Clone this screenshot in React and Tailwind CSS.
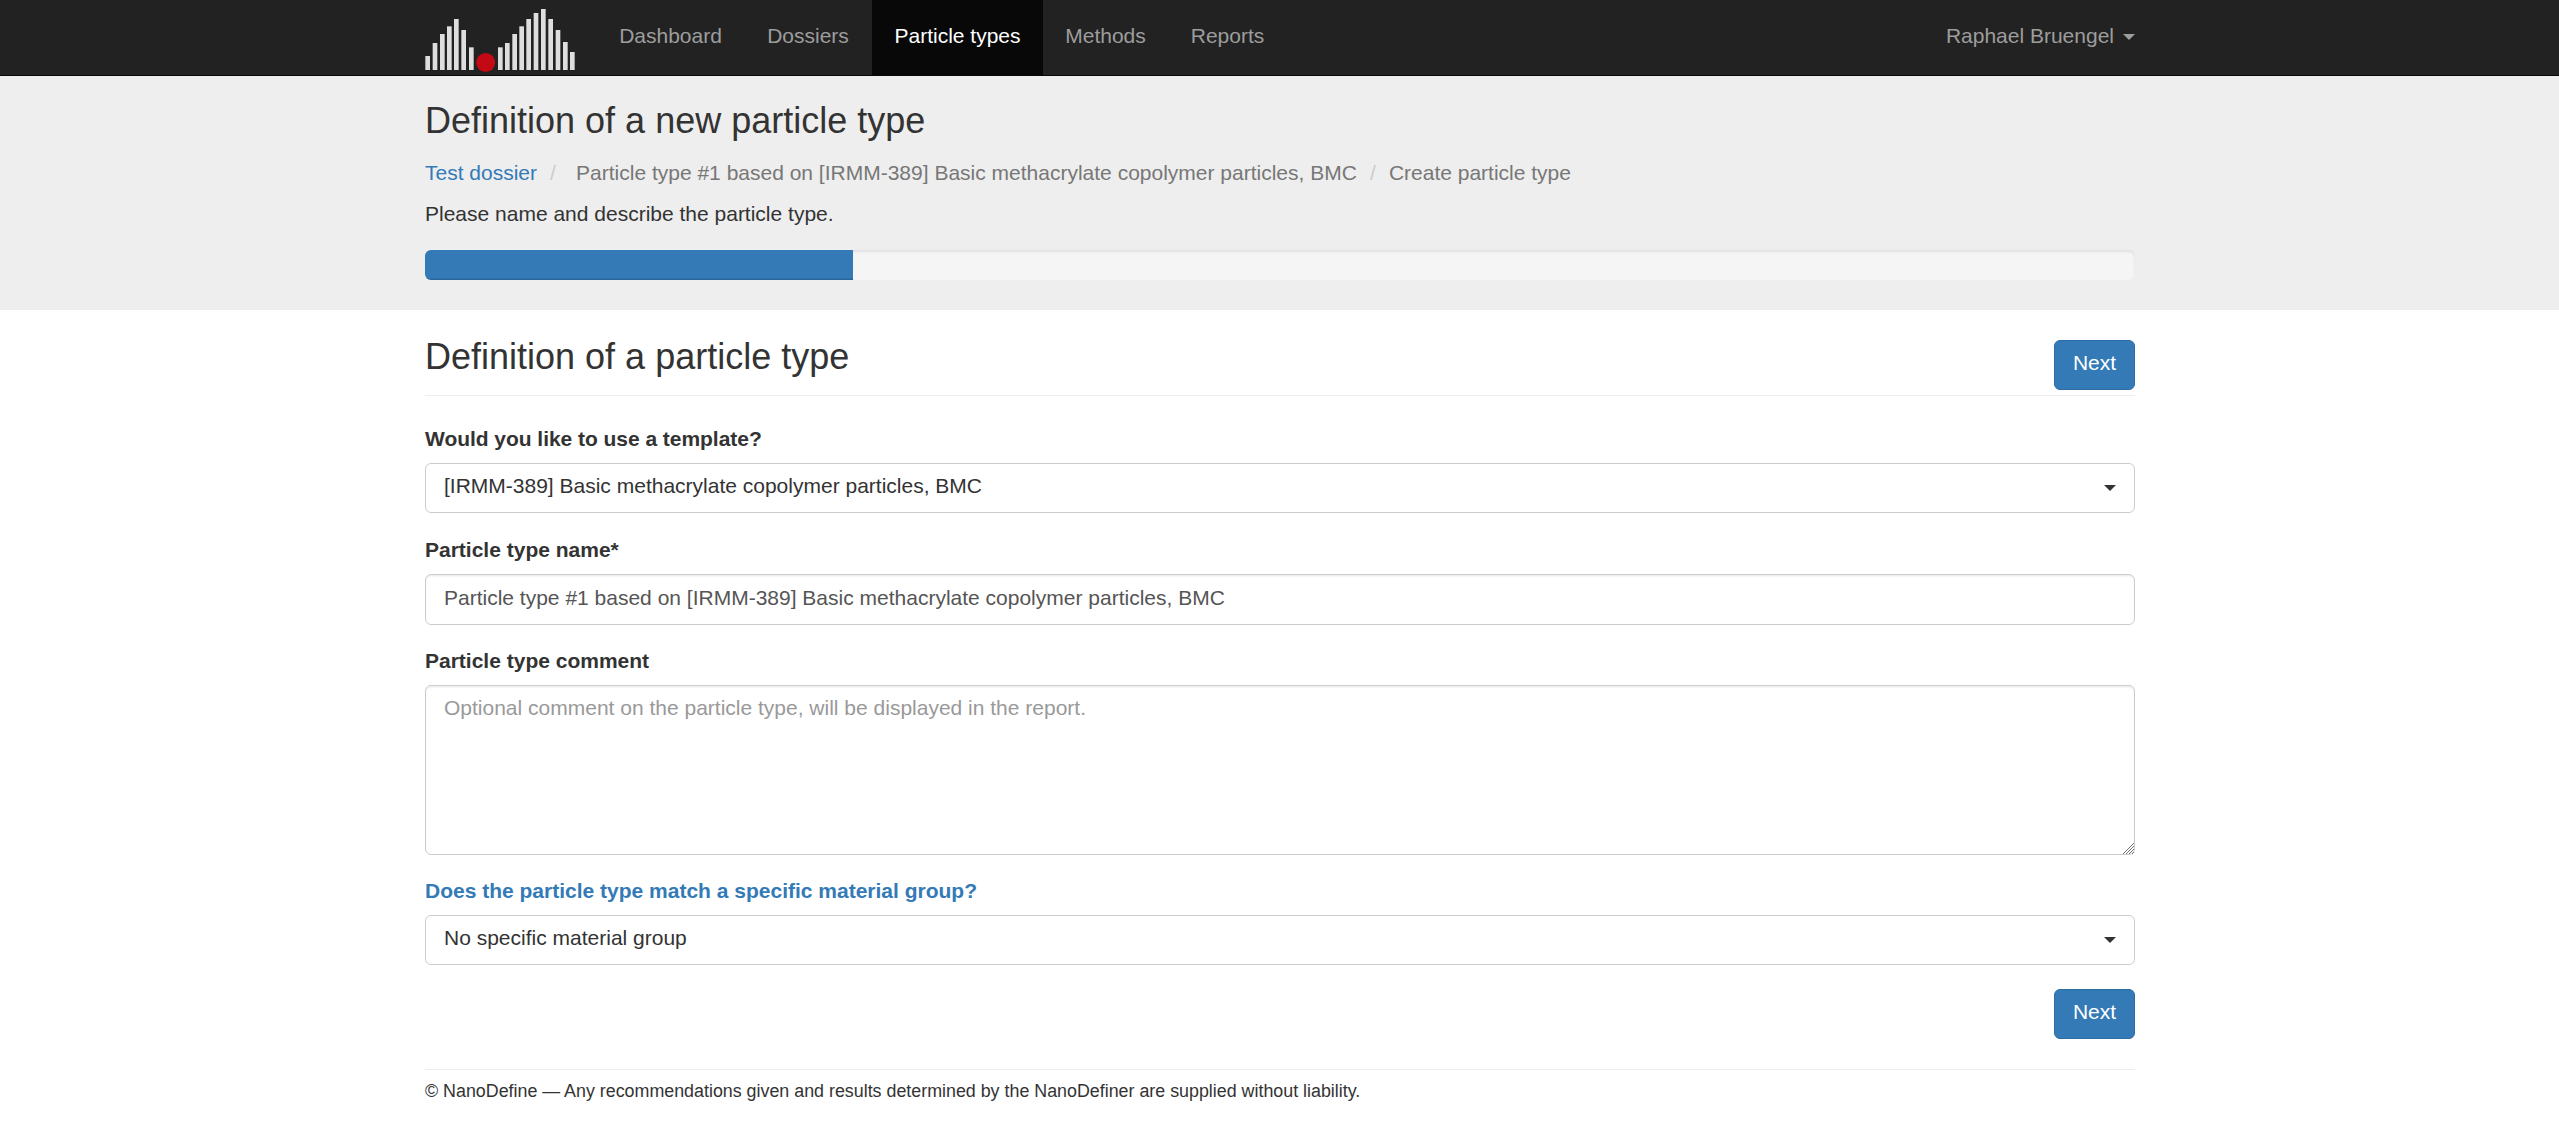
const BARS = [
  [31, 168], [53, 129], [75, 102], [96, 79], [117, 57], [139, 90], [162, 142],
  [249, 142], [270, 129], [292, 102], [313, 79], [334, 57], [356, 39],
  [378, 27], [400, 57], [422, 90], [444, 126], [465, 156],
];

function Logo() {
  return (
    <svg viewBox="30 0 450 225" className="h-[75px] w-[150px] shrink-0">
      {BARS.map(([x, top]) => (
        <rect key={x} x={x} y={top} width="14" height={210 - top} fill="#dedede" />
      ))}
      <circle cx="212" cy="187.500" r="28.500" fill="#c30a14" />
    </svg>
  );
}

function Caret({ className }) {
  return (
    <svg viewBox="0 0 12 6" className={`h-1.5 w-3 shrink-0 fill-current ${className}`}>
      <path d="M0 0h12L6 6z" />
    </svg>
  );
}

const NAV = [
  { label: "Dashboard", box: "w-[147px]" },
  { label: "Dossiers", box: "w-[128px]" },
  { label: "Particle types", box: "w-[171px]", active: true },
  { label: "Methods", box: "w-[125px]" },
  { label: "Reports", box: "w-[119px]" },
];

function Navbar() {
  return (
    <nav className="h-[76px] border-b border-[#080808] bg-[#222222] pl-px">
      <div className="mx-auto flex h-[75px] w-[1710px]">
        <Logo />
        <ul className="ml-[22px] flex">
          {NAV.map(({ label, box, active }) => (
            <li
              key={label}
              className={`${box} whitespace-nowrap pt-[21px] text-center ${
                active ? "bg-[#080808] text-white" : "text-[#9d9d9d]"
              }`}
            >
              {label}
            </li>
          ))}
        </ul>
        <div className="ml-auto flex pt-[21px] text-[#9d9d9d]">
          Raphael Bruengel
          <Caret className="ml-[9px] mt-[13px]" />
        </div>
      </div>
    </nav>
  );
}

function Select({ children }) {
  return (
    <button className="flex h-[50px] w-full items-start rounded-[6px] border border-[#cccccc] bg-white pl-[18px] pr-[18px] pt-[7px] text-left">
      {children}
      <Caret className="ml-auto mt-[14px]" />
    </button>
  );
}

function NextButton() {
  return (
    <button className="h-[50px] w-[81px] rounded-[6px] border border-[#2e6da4] bg-[#337ab7] pb-[5px] text-white">
      Next
    </button>
  );
}

const INSET = "shadow-[inset_0_1.5px_1.5px_rgba(0,0,0,0.075)]";

export default function App() {
  return (
    <div className="h-[1137px] overflow-hidden bg-white font-['Liberation_Sans',Arial,sans-serif] text-[21px] leading-[30px] text-[#333333]">
      <Navbar />
      <header className="h-[234px] bg-[#eeeeee] pl-px pt-[25px]">
        <div className="mx-auto w-[1710px]">
          <h1 className="text-[36px] leading-10">Definition of a new particle type</h1>
          <div className="mt-[17px] flex whitespace-pre text-[#777777]">
            <span className="text-[#337ab7]">Test dossier</span>
            <span className="w-[39px] pl-[13px] text-[#cccccc]">/</span>
            <span>Particle type #1 based on [IRMM-389] Basic methacrylate copolymer particles, BMC</span>
            <span className="w-8 text-center text-[#cccccc]">/</span>
            <span>Create particle type</span>
          </div>
          <p className="mt-[11px]">Please name and describe the particle type.</p>
          <div className="mt-[21px] h-[30px] overflow-hidden rounded-[6px] bg-[#f5f5f5] shadow-[inset_0_1.5px_3px_rgba(0,0,0,0.1)]">
            <div className="h-full w-[428px] bg-[#337ab7] shadow-[inset_0_-1.5px_0_rgba(0,0,0,0.15)]" />
          </div>
        </div>
      </header>
      <div className="pl-px">
        <main className="mx-auto w-[1710px]">
          <div className="flex h-[86px] items-start justify-between border-b border-[#eeeeee] pt-[30px]">
            <h2 className="-mt-[3px] text-[36px] leading-10">Definition of a particle type</h2>
            <NextButton />
          </div>
          <div className="pt-[28px]">
            <label className="block font-bold tracking-[-0.04px]">Would you like to use a template?</label>
            <div className="mt-[9px]">
              <Select>[IRMM-389] Basic methacrylate copolymer particles, BMC</Select>
            </div>
          </div>
          <div className="pt-[22px]">
            <label className="block font-bold">Particle type name*</label>
            <input
              className={`mt-[9px] block h-[51px] w-full rounded-[6px] border border-[#cccccc] px-[18px] pb-[3px] text-[#555555] ${INSET}`}
              defaultValue="Particle type #1 based on [IRMM-389] Basic methacrylate copolymer particles, BMC"
            />
          </div>
          <div className="pt-[21px]">
            <label className="block font-bold">Particle type comment</label>
            <div className="relative mt-[9px]">
              <textarea
                className={`block h-[170px] w-full resize-none rounded-[6px] border border-[#cccccc] px-[18px] pt-[7px] placeholder:text-[#999999] ${INSET}`}
                placeholder="Optional comment on the particle type, will be displayed in the report."
              />
              <svg viewBox="0 0 11 11" className="absolute bottom-px right-px h-[11px] w-[11px]" stroke="#707070" strokeWidth="1">
                <path d="M0 11L11 0M3 11L11 3M6 11L11 6M9 11L11 9" />
              </svg>
            </div>
          </div>
          <div className="pt-[21px]">
            <label className="block font-bold text-[#337ab7]">Does the particle type match a specific material group?</label>
            <div className="mt-[9px]">
              <Select>No specific material group</Select>
            </div>
          </div>
          <div className="mt-6 flex justify-end">
            <NextButton />
          </div>
          <footer className="mt-[30px] border-t border-[#eeeeee] pt-[8px] text-[17.85px] leading-[26px]">
            © NanoDefine — Any recommendations given and results determined by the NanoDefiner are supplied without liability.
          </footer>
        </main>
      </div>
    </div>
  );
}
